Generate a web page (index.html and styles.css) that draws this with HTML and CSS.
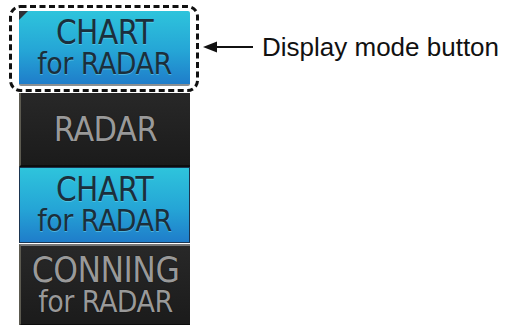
FILE: index.html
```html
<!DOCTYPE html>
<html lang="en">
<head>
    <meta charset="UTF-8">
    <title>Display mode button</title>
    <link rel="stylesheet" href="styles.css">
</head>
<body>

<div class="panel">
    <div class="callout-row">
        <div class="callout">
            <svg class="dash" width="190" height="87" viewBox="0 0 190 87">
                <rect x="1.5" y="1.5" width="187" height="84" rx="10" ry="10"
                      fill="none" stroke="#111" stroke-width="3" stroke-dasharray="6 3.5"/>
            </svg>
            <div class="btn btn-blue btn-active">
                <span class="big">CHART</span>
                <span class="small">for RADAR</span>
            </div>
        </div>
        <svg class="arrow" width="52" height="14" viewBox="0 0 52 14">
            <line x1="10" y1="7" x2="50" y2="7" stroke="#111" stroke-width="2"/>
            <polygon points="0,7 14,1.5 14,12.5" fill="#111"/>
        </svg>
        <span class="label">Display mode button</span>
    </div>

    <div class="btn btn-dark btn-radar">
        <span class="big">RADAR</span>
    </div>
    <div class="btn btn-blue">
        <span class="big">CHART</span>
        <span class="small">for RADAR</span>
    </div>
    <div class="btn btn-dark btn-conning">
        <span class="big">CONNING</span>
        <span class="small">for RADAR</span>
    </div>
</div>

</body>
</html>
```

FILE: styles.css
```css
body {
    margin: 0;
    background-color: #fff;
    font-family: "DejaVu Sans", sans-serif;
    overflow: hidden;
}

.panel {
    padding-top: 5px;
    display: flex;
    flex-direction: column;
}

.callout-row {
    display: flex;
    align-items: center;
    padding-left: 9px;
}

.callout {
    position: relative;
    width: 190px;
    height: 87px;
    box-sizing: border-box;
    padding: 6px 0 0 10px;
}

.dash {
    position: absolute;
    left: 0;
    top: 0;
}

.arrow {
    margin-left: 4px;
    margin-top: -3px;
}

.label {
    margin-left: 7px;
    margin-top: -3px;
    font-family: "Liberation Sans", Arial, sans-serif;
    font-size: 26px;
    color: #111;
}

.btn {
    width: 171px;
    box-sizing: border-box;
    display: flex;
    flex-direction: column;
    align-items: center;
    justify-content: center;
    font-stretch: condensed;
    line-height: 31px;
}

.panel > .btn {
    margin-left: 19px;
}

.big {
    font-size: 33px;
    letter-spacing: -0.5px;
}

.small {
    font-size: 30px;
    letter-spacing: -0.5px;
}

.btn-blue {
    height: 76px;
    background: linear-gradient(#2ec4dc, #25a5d6 55%, #1f7dca);
    color: #1b2f3c;
    text-shadow: 0 1px 0 rgba(120, 220, 240, 0.5);
    border: 1px solid #1b3550;
}

.btn-active {
    position: relative;
    height: 75px;
    border: none;
    border-bottom: 2px solid #8a8f92;
    border-radius: 2px;
}

.btn-active::before {
    content: "";
    position: absolute;
    left: 0;
    top: 0;
    border-top: 9px solid #2c3238;
    border-right: 9px solid transparent;
}

.btn-dark {
    background: linear-gradient(#282828, #1b1b1b);
    color: #999;
    text-shadow: 0 0 1px #000;
    border-left: 2px solid #5c5a50;
    border-bottom: 2px solid #0d0d0d;
}

.btn-radar {
    margin-top: 1px;
    height: 74px;
}

.btn-radar .big {
    font-size: 34px;
}

.btn-conning {
    height: 82px;
    margin-top: 1px;
    border-top: 2px solid #777;
    padding-top: 2px;
}

.btn-conning .big {
    font-size: 35px;
}
```
